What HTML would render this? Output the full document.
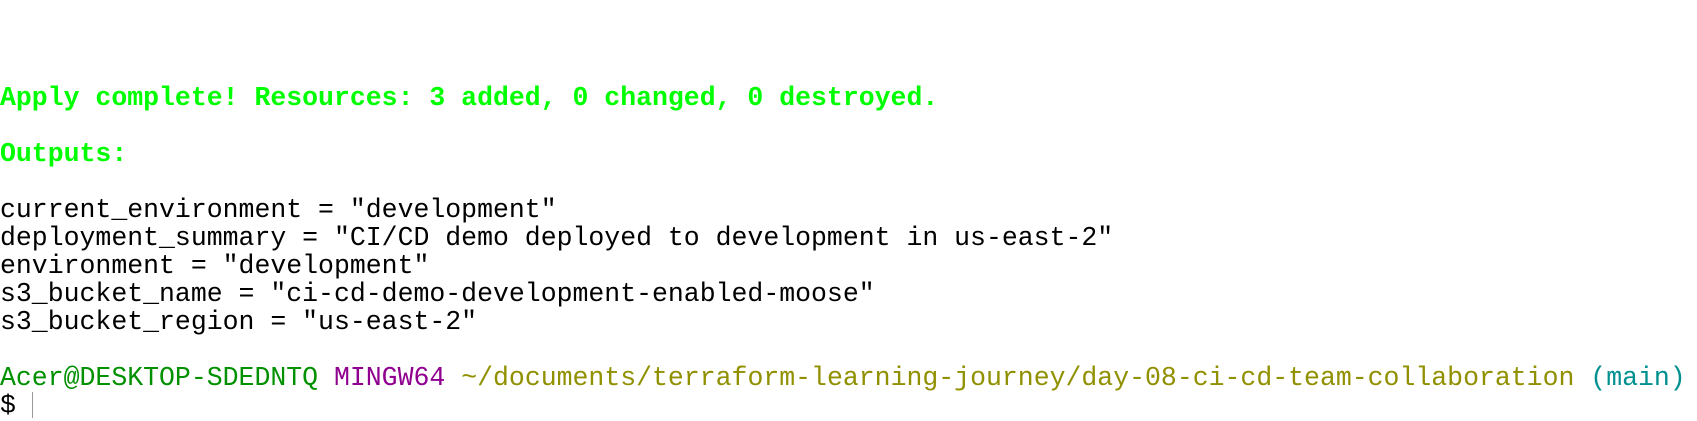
<!DOCTYPE html>
<html><head><style>
html,body{margin:0;padding:0;background:#fff;width:1697px;height:400px;overflow:hidden}
pre{margin:0;position:absolute;left:0;top:84px;font-family:"Liberation Mono",monospace;font-size:26.5px;line-height:28px;color:#000;white-space:pre}
.g{color:#0f0;font-weight:bold}.pg{color:#009000}.m{color:#900090}.o{color:#909000}.t{color:#009090}
.cur{display:inline-block;width:1px;height:26px;background:#999;vertical-align:top}
</style></head><body>
<pre><span class="g">Apply complete! Resources: 3 added, 0 changed, 0 destroyed.</span>

<span class="g">Outputs:</span>

current_environment = "development"
deployment_summary = "CI/CD demo deployed to development in us-east-2"
environment = "development"
s3_bucket_name = "ci-cd-demo-development-enabled-moose"
s3_bucket_region = "us-east-2"

<span class="pg">Acer@DESKTOP-SDEDNTQ</span> <span class="m">MINGW64</span> <span class="o">~/documents/terraform-learning-journey/day-08-ci-cd-team-collaboration</span> <span class="t">(main)</span>
$ <span class="cur"></span></pre>
</body></html>
